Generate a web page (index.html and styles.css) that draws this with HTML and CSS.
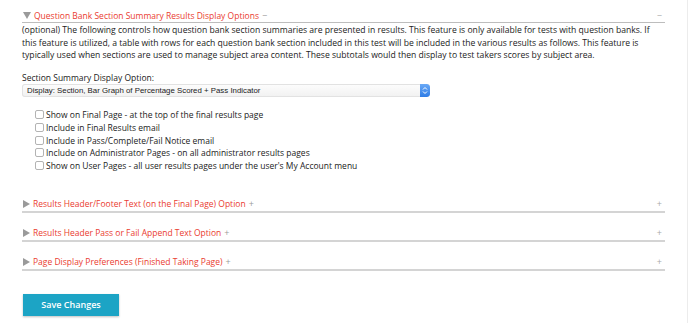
FILE: index.html
```html
<!DOCTYPE html>
<html lang="en">
<head>
  <meta charset="UTF-8">
  <title>Results Display Options</title>
  <link rel="stylesheet" href="styles.css">
</head>
<body>
  <div class="page">
    <div class="section open">
      <div class="section-head">
        <span class="arrow down"></span>
        <span class="section-title">Question Bank Section Summary Results Display Options</span>
        <span class="toggle-sign">&minus;</span>
        <span class="toggle-right">&minus;</span>
      </div>
      <p class="desc">(optional) The following controls how question bank section summaries are presented in results. This feature is only available for tests with question banks. If this feature is utilized, a table with rows for each question bank section included in this test will be included in the various results as follows. This feature is typically used when sections are used to manage subject area content. These subtotals would then display to test takers scores by subject area.</p>

      <div class="field-label">Section Summary Display Option:</div>
      <div class="select-box">
        <span class="select-text">Display: Section, Bar Graph of Percentage Scored + Pass Indicator</span>
        <span class="select-btn">
          <svg width="6" height="9" viewBox="0 0 6 9"><path d="M1 3.5 L3 1.5 L5 3.5 M1 5.5 L3 7.5 L5 5.5" fill="none" stroke="#fff" stroke-width="1"/></svg>
        </span>
      </div>

      <ul class="checks">
        <li><span class="box"></span><span class="strong">Show on Final Page</span> - at the top of the final results page</li>
        <li><span class="box"></span><span class="strong">Include in Final Results</span> email</li>
        <li><span class="box"></span><span class="strong">Include in Pass/Complete/Fail Notice</span> email</li>
        <li><span class="box"></span><span class="strong">Include on Administrator Pages</span> - on all administrator results pages</li>
        <li><span class="box"></span><span class="strong">Show on User Pages</span> - all user results pages under the user's My Account menu</li>
      </ul>
    </div>

    <div class="section closed first-closed">
      <div class="section-head">
        <span class="arrow right"></span>
        <span class="section-title">Results Header/Footer Text (on the Final Page) Option</span>
        <span class="toggle-sign">+</span>
        <span class="toggle-right">+</span>
      </div>
    </div>
    <div class="section closed">
      <div class="section-head">
        <span class="arrow right"></span>
        <span class="section-title">Results Header Pass or Fail Append Text Option</span>
        <span class="toggle-sign">+</span>
        <span class="toggle-right">+</span>
      </div>
    </div>
    <div class="section closed">
      <div class="section-head">
        <span class="arrow right"></span>
        <span class="section-title">Page Display Preferences (Finished Taking Page)</span>
        <span class="toggle-sign">+</span>
        <span class="toggle-right">+</span>
      </div>
    </div>

    <button class="save-btn">Save Changes</button>
  </div>
</body>
</html>
```
FILE: styles.css
```css
body {
  margin: 0;
  padding: 0;
  background: #fff;
  font-family: 'Open Sans', sans-serif;
  color: #222;
}

.page {
  width: 643px;
  height: 323px;
  padding: 0 22px;
  border-right: 1px solid #ececec;
  box-sizing: content-box;
}

.section-head {
  display: flex;
  align-items: center;
  height: 14px;
}

.open .section-head {
  padding-top: 8px;
  border-bottom: 1px solid #bdbdbd;
}

.closed .section-head {
  margin-top: 13px;
  border-bottom: 2px solid #d4d4d4;
}

.first-closed .section-head {
  margin-top: 25px;
}

.arrow {
  display: inline-block;
  width: 0;
  height: 0;
  margin-left: 1px;
  margin-right: 3px;
}

.arrow.down {
  border-left: 4px solid transparent;
  border-right: 4px solid transparent;
  border-top: 7px solid #9a9a9a;
}

.arrow.right {
  border-top: 4px solid transparent;
  border-bottom: 4px solid transparent;
  border-left: 7px solid #9a9a9a;
}

.section-title {
  font-size: 8.5px;
  color: #ea3b2f;
}

.toggle-sign {
  font-size: 9px;
  color: #9a9a9a;
  margin-left: 3px;
}

.toggle-right {
  margin-left: auto;
  margin-right: 3px;
  font-size: 9px;
  color: #a8a8a8;
}

.desc {
  margin: 1px 0 0;
  font-size: 8.6px;
  line-height: 12.5px;
  color: #222;
}

.field-label {
  margin-top: 10px;
  font-size: 8.5px;
  line-height: 12px;
  color: #222;
}

.select-box {
  display: flex;
  align-items: center;
  width: 408px;
  height: 13px;
  border-radius: 3px;
  background: linear-gradient(#fdfdfd, #f1f1f1);
  box-shadow: 0 0 0 1px #e2e2e2 inset;
  box-sizing: border-box;
  overflow: hidden;
}

.select-text {
  flex: 1;
  padding-left: 5px;
  font-family: 'Liberation Sans', Arial, sans-serif;
  font-size: 7.85px;
  color: #222;
}

.select-btn {
  display: flex;
  align-items: center;
  justify-content: center;
  width: 10px;
  height: 13px;
  background: linear-gradient(#6aa9f6, #2f7de6);
  border-radius: 0 3px 3px 0;
}

.checks {
  list-style: none;
  margin: 12px 0 0;
  padding: 0 0 0 13px;
}

.checks li {
  display: flex;
  align-items: center;
  height: 12.7px;
  font-size: 8.5px;
  color: #222;
  white-space: pre;
}

.box {
  width: 7px;
  height: 7px;
  border: 1px solid #b3b3b3;
  border-radius: 2px;
  margin-right: 2px;
  background: #fff;
}

.save-btn {
  display: block;
  margin-top: 23px;
  margin-left: 1px;
  width: 96px;
  height: 22px;
  border: none;
  background: #1ca4c5;
  color: #fff;
  font-family: 'Open Sans', sans-serif;
  font-weight: 600;
  font-size: 9px;
  box-shadow: 0 1px 2px rgba(0, 0, 0, 0.25);
  cursor: pointer;
}
```
